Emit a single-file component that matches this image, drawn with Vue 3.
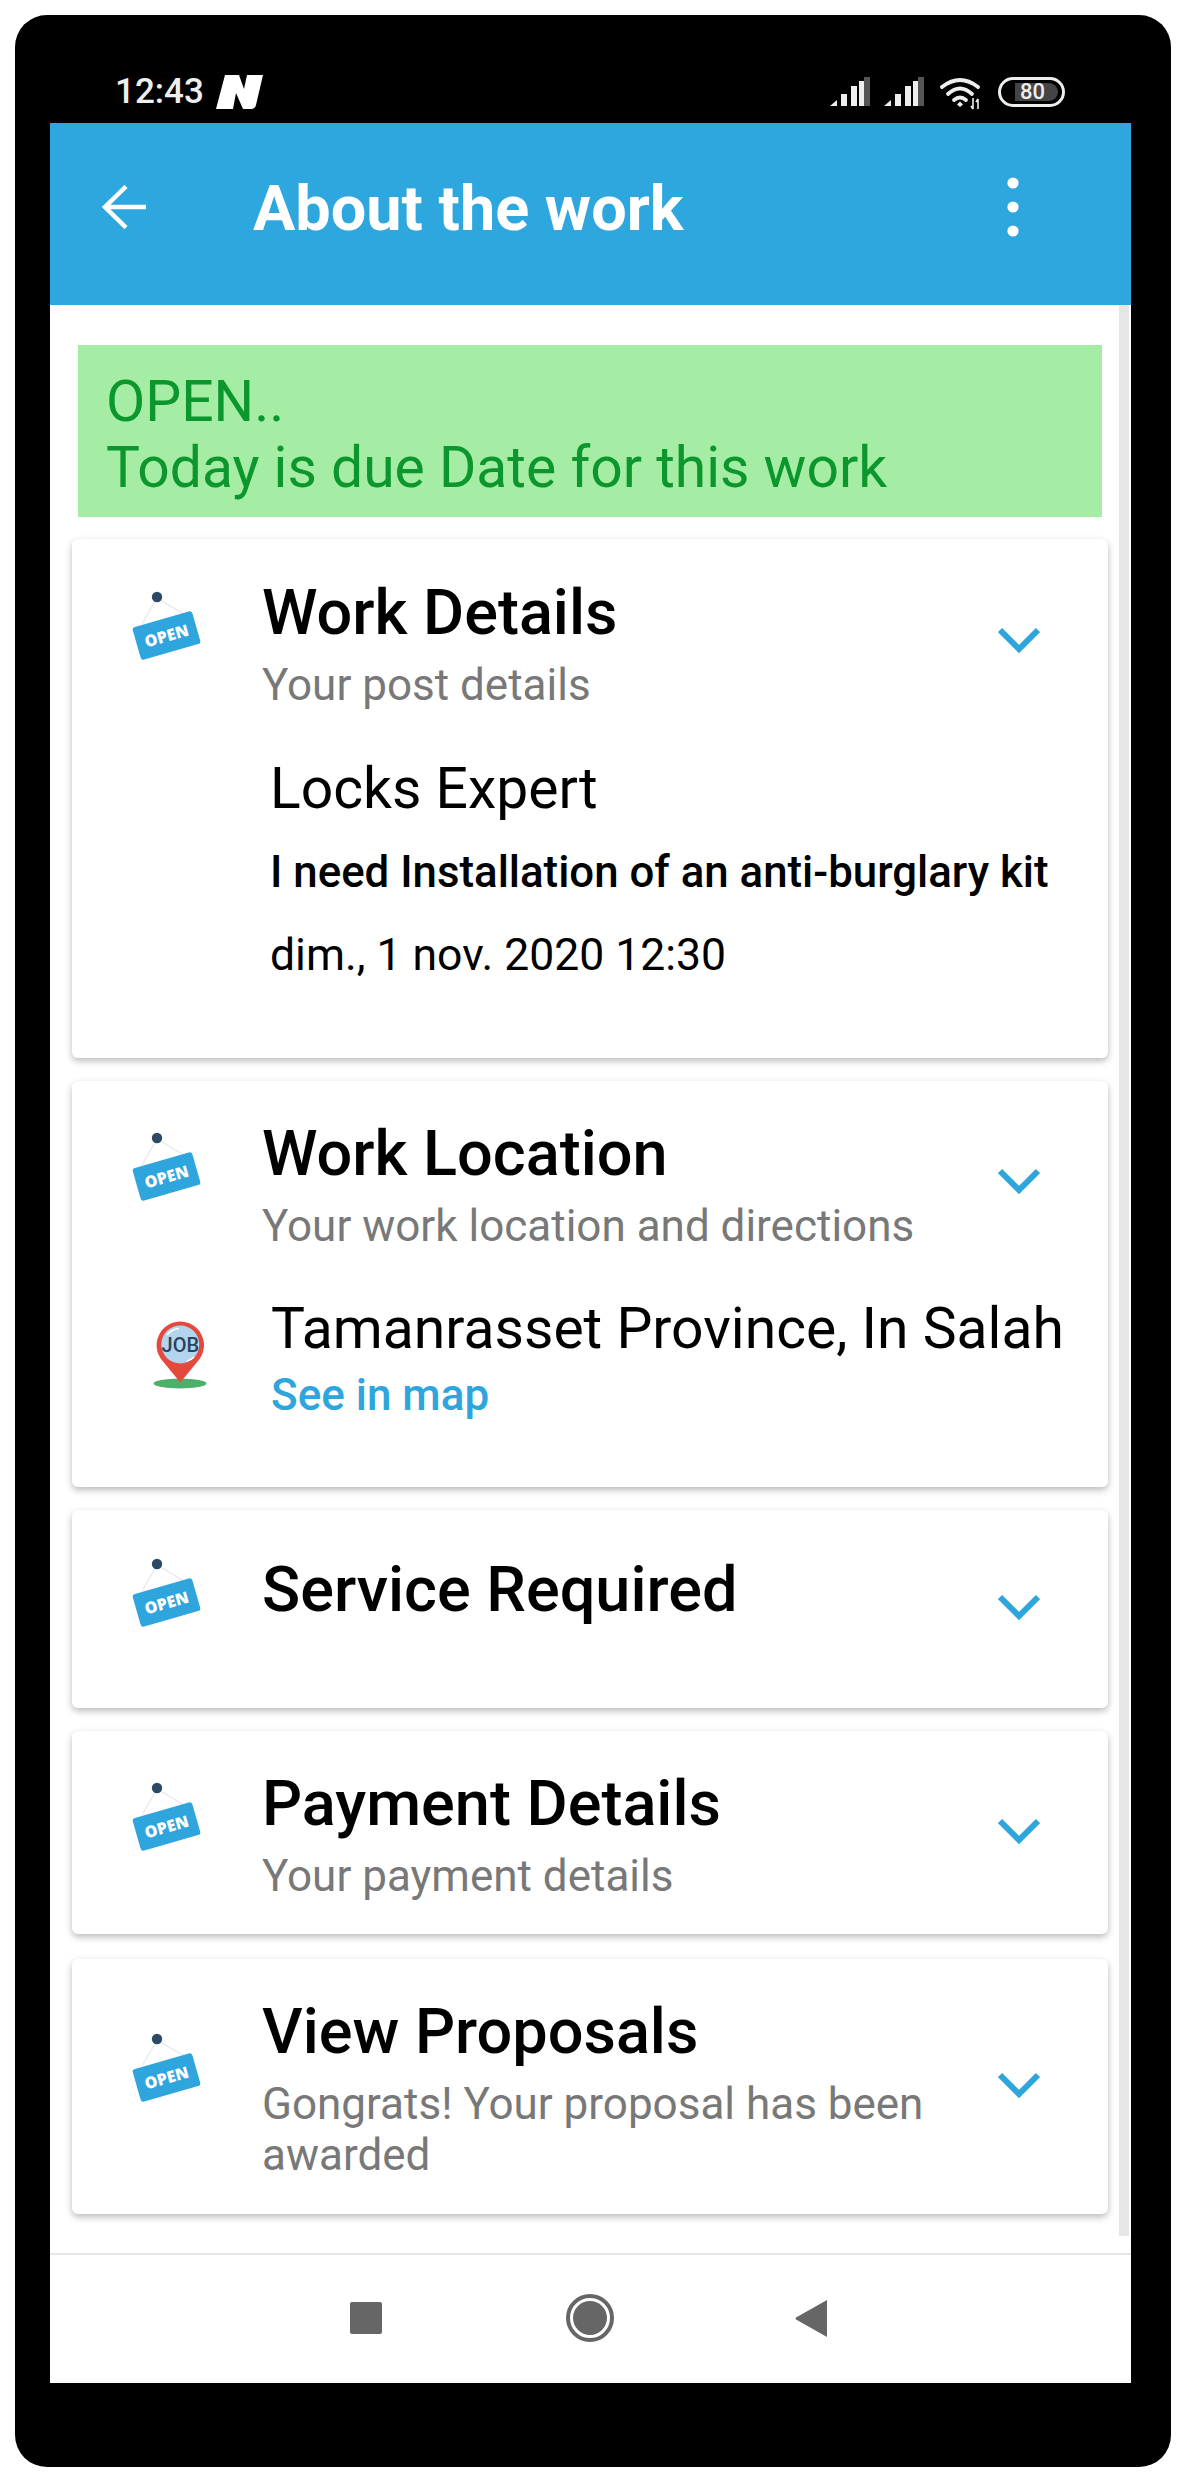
<script setup>
const cards = [
  { id: 'details', title: 'Work Details', sub: 'Your post details' },
  { id: 'location', title: 'Work Location', sub: 'Your work location and directions' },
  { id: 'service', title: 'Service Required', sub: '' },
  { id: 'payment', title: 'Payment Details', sub: 'Your payment details' },
  { id: 'proposals', title: 'View Proposals', sub: 'Gongrats! Your proposal has been awarded' },
]
</script>

<template>
  <div class="page">
    <div class="phone">
      <div class="status">
        <div class="status-left">
          <span class="time">12:43</span>
          <svg class="n-logo" width="47" height="35" viewBox="0 0 47 35">
            <path d="M9 1H23L28 15L31 1H47L40 31Q39 35 35 35H27L20 19L17 35H0Z" fill="#fff"/>
          </svg>
        </div>
        <div class="status-right">
          <svg width="40" height="29" viewBox="0 0 40 29">
            <path d="M0 29L7 23V29Z" fill="#eee"/>
            <rect x="11" y="17" width="6" height="12" fill="#eee"/>
            <rect x="21" y="9" width="6" height="20" fill="#eee"/>
            <rect x="34" y="0" width="6" height="29" fill="#555"/>
            <rect x="29" y="4" width="5" height="25" fill="#eee"/>
          </svg>
          <svg width="40" height="29" viewBox="0 0 40 29">
            <path d="M0 29L7 23V29Z" fill="#eee"/>
            <rect x="11" y="17" width="6" height="12" fill="#eee"/>
            <rect x="21" y="9" width="6" height="20" fill="#eee"/>
            <rect x="34" y="0" width="6" height="29" fill="#555"/>
            <rect x="29" y="4" width="5" height="25" fill="#eee"/>
          </svg>
          <svg class="wifi" width="42" height="33" viewBox="0 0 42 33" fill="none" stroke="#eee" stroke-width="3.8" stroke-linecap="round">
            <path d="M2 10Q20 -4 38 10"/>
            <path d="M8 17Q20 6 32 17"/>
            <path d="M14 23Q20 18 26 23"/>
            <path d="M20 24.5L23 27.5L20 30L17 27.5Z" fill="#eee" stroke="none"/>
            <path d="M33 21V32M38 22V32M31 29L33 32M36 25L38 22" stroke-width="1.6" stroke-linecap="butt"/>
          </svg>
          <div class="battery">
            <div class="battery-fill"><span>80</span></div>
          </div>
        </div>
      </div>

      <div class="screen">
        <header class="appbar">
          <svg class="up" width="44" height="44" viewBox="0 0 44 44" fill="none" stroke="#fff" stroke-width="4.5">
            <path d="M44 22H3M24 1.5L3 22L24 42.5"/>
          </svg>
          <h1 class="appbar-title">About the work</h1>
          <svg class="up" width="12" height="60" viewBox="0 0 12 60" fill="#fff">
            <circle cx="6" cy="6" r="5.6"/>
            <circle cx="6" cy="30" r="5.6"/>
            <circle cx="6" cy="54" r="5.6"/>
          </svg>
        </header>

        <main class="content">
          <div class="scrollbar"></div>
          <div class="banner">OPEN..<br>Today is due Date for this work</div>

          <section v-for="c in cards" :key="c.id" class="card" :class="'card-' + c.id">
            <div class="card-head">
              <div class="sign">
                <svg width="80" height="80" viewBox="0 0 80 80">
                  <path d="M29 8L14 34M29 8L56 24" stroke="#e4e8ec" stroke-width="1.2" fill="none"/>
                  <circle cx="29" cy="7" r="5.2" fill="#2c4a66"/>
                  <g transform="rotate(-16 38.5 45.5)">
                    <rect x="7.5" y="28.5" width="62" height="34" rx="3" fill="#2fa5dd"/>
                    <text x="38.5" y="51.5" text-anchor="middle" class="sign-text">OPEN</text>
                  </g>
                </svg>
              </div>
              <div class="head-text">
                <h2 class="card-title">{{ c.title }}</h2>
                <p v-if="c.sub" class="card-sub">{{ c.sub }}</p>
              </div>
              <svg class="chev" width="42" height="26" viewBox="0 0 42 26" fill="none" stroke="#2fa5dd" stroke-width="6">
                <path d="M2 3L21 22L40 3"/>
              </svg>
            </div>

            <div v-if="c.id === 'details'" class="details-body">
              <p class="job">Locks Expert</p>
              <p class="desc">I need Installation of an anti-burglary kit</p>
              <p class="date">dim., 1 nov. 2020 12:30</p>
            </div>

            <div v-if="c.id === 'location'" class="loc-body">
              <svg class="job-pin" width="54" height="68" viewBox="0 0 54 68">
                <ellipse cx="27" cy="62.5" rx="26.5" ry="5" fill="#4caf6a"/>
                <path d="M27.3 61.5L8 38A23.7 23.7 0 1 1 46.6 38Z" fill="#e5493d"/>
                <circle cx="27.3" cy="23.5" r="19" fill="#b3d4ee"/>
                <path d="M14 14Q19 8 26 7.5M34 40Q38 39 41 36" stroke="#fff" stroke-width="1.6" fill="none"/>
                <text x="27.3" y="30.5" text-anchor="middle" class="pin-text">JOB</text>
              </svg>
              <div>
                <p class="place">Tamanrasset Province, In Salah</p>
                <p class="map-link">See in map</p>
              </div>
            </div>
          </section>
        </main>

        <nav class="navbar">
          <span class="nav-square"></span>
          <span class="nav-circle"><span></span></span>
          <svg class="nav-back" width="32" height="37" viewBox="0 0 32 37"><path d="M32 0V37L1 19.5Q0 18.5 1 17.5Z" fill="#666"/></svg>
        </nav>
      </div>
    </div>
  </div>
</template>

<style>
html, body { margin: 0; background: #fff; }
</style>

<style scoped>
.page {
  width: 1192px;
  height: 2480px;
  padding: 15px 21px 13px 15px;
  box-sizing: border-box;
  font-family: Roboto, "Liberation Sans", sans-serif;
  background: #fff;
}
.phone {
  height: 100%;
  background: #000;
  border-radius: 32px;
  padding: 0 40px 84px 35px;
  box-sizing: border-box;
  display: flex;
  flex-direction: column;
}
.status {
  height: 108px;
  flex: none;
  display: flex;
  justify-content: space-between;
  align-items: flex-start;
  color: #eee;
}
.status-left {
  display: flex;
  align-items: center;
  gap: 12px;
  margin: 59px 0 0 65px;
}
.time { font-size: 35px; font-weight: 500; line-height: 34px; }
.status-right {
  display: flex;
  align-items: flex-start;
  gap: 14px;
  margin: 62px 66px 0 0;
}
.wifi { margin-left: 2px; }
.battery {
  width: 67px;
  height: 30px;
  box-sizing: border-box;
  border: 3px solid #eee;
  border-radius: 15px;
  padding: 3px 4px 3px 14px;
  margin-left: 2px;
}
.battery-fill {
  height: 100%;
  background: #444;
  border-radius: 0 9px 9px 0;
  font-size: 22px;
  font-weight: 500;
  line-height: 18px;
  padding-left: 5px;
}
.screen {
  flex: 1;
  display: flex;
  flex-direction: column;
  background: #fff;
  min-height: 0;
}
.appbar {
  height: 182px;
  flex: none;
  background: #2ea6de;
  display: flex;
  align-items: center;
  padding: 0 112px 0 52px;
}
.up { margin-bottom: 14px; flex: none; }
.appbar-title {
  margin: 0 0 10px 107px;
  flex: 1;
  color: #fff;
  font-size: 63px;
  font-weight: 700;
  line-height: 72px;
}
.content {
  flex: 1;
  position: relative;
  padding: 40px 23px 0 22px;
  min-height: 0;
}
.scrollbar {
  position: absolute;
  right: 2px;
  top: 0;
  bottom: 17px;
  width: 10px;
  background: #e6e6e6;
}
.banner {
  margin: 0 6px;
  height: 172px;
  box-sizing: border-box;
  padding: 24px 28px 0;
  background: #a5eda5;
  color: #0c962e;
  font-size: 57px;
  line-height: 66px;
}
.card {
  background: #fff;
  border-radius: 6px;
  box-shadow: 0 3px 7px rgba(0, 0, 0, 0.28);
  margin-top: 23px;
  width: 1036px;
  box-sizing: border-box;
}
.banner + .card { margin-top: 22px; }
.card-details { height: 519px; }
.card-location { height: 406px; }
.card-service { height: 198px; }
.card-payment { height: 203px; }
.card-proposals { height: 255px; margin-top: 25px; }
.card-head {
  display: flex;
  align-items: center;
  padding: 41px 68px 0 56px;
}
.card-details .card-head { padding-top: 42px; }
.sign { width: 80px; flex: none; display: flex; margin-bottom: 32px; }
.card-proposals .sign { margin-bottom: 38px; }
.head-text { flex: 1; margin-left: 54px; }
.card-title {
  margin: 0;
  font-size: 63px;
  font-weight: 500;
  line-height: 64px;
  color: #000;
}
.card-service .card-title { margin: 7px 0 52px; }
.card-sub {
  margin: 15px 0 0;
  font-size: 44px;
  line-height: 51px;
  color: #787878;
}
.chev { flex: none; margin: 0 0 12px 30px; }
.sign-text {
  font-family: "Open Sans", sans-serif;
  font-size: 16px;
  font-weight: 800;
  fill: #fff;
}
.pin-text {
  font-family: Roboto, sans-serif;
  font-size: 20px;
  font-weight: 500;
  fill: #27445e;
}
.details-body { padding: 46px 0 0 198px; }
.job {
  margin: 0;
  font-size: 57px;
  line-height: 64px;
  color: #000;
}
.desc {
  margin: 25px 0 0;
  font-size: 43.8px;
  font-weight: 500;
  line-height: 52px;
  color: #000;
}
.date {
  margin: 31px 0 0;
  font-size: 44.5px;
  line-height: 52px;
  color: #000;
}
.loc-body {
  display: flex;
  align-items: center;
  gap: 64px;
  padding: 45px 0 0 81px;
}
.job-pin { flex: none; margin-bottom: 9px; }
.place {
  margin: 0;
  font-size: 57px;
  line-height: 64px;
  white-space: nowrap;
  color: #000;
}
.map-link {
  margin: 8px 0 0;
  font-size: 44px;
  font-weight: 500;
  line-height: 52px;
  color: #2fa5dd;
}
.navbar {
  height: 130px;
  flex: none;
  box-sizing: border-box;
  border-top: 2px solid #e6e6e6;
  display: flex;
  align-items: center;
  padding: 0 0 2px 300px;
  gap: 184px;
}
.nav-square {
  width: 32px;
  height: 32px;
  border-radius: 2px;
  background: #666;
}
.nav-circle {
  width: 48px;
  height: 48px;
  box-sizing: border-box;
  border: 4px solid #666;
  border-radius: 50%;
  padding: 3px;
}
.nav-circle span {
  display: block;
  width: 100%;
  height: 100%;
  border-radius: 50%;
  background: #666;
}
.nav-back { margin-left: -3px; }
</style>
